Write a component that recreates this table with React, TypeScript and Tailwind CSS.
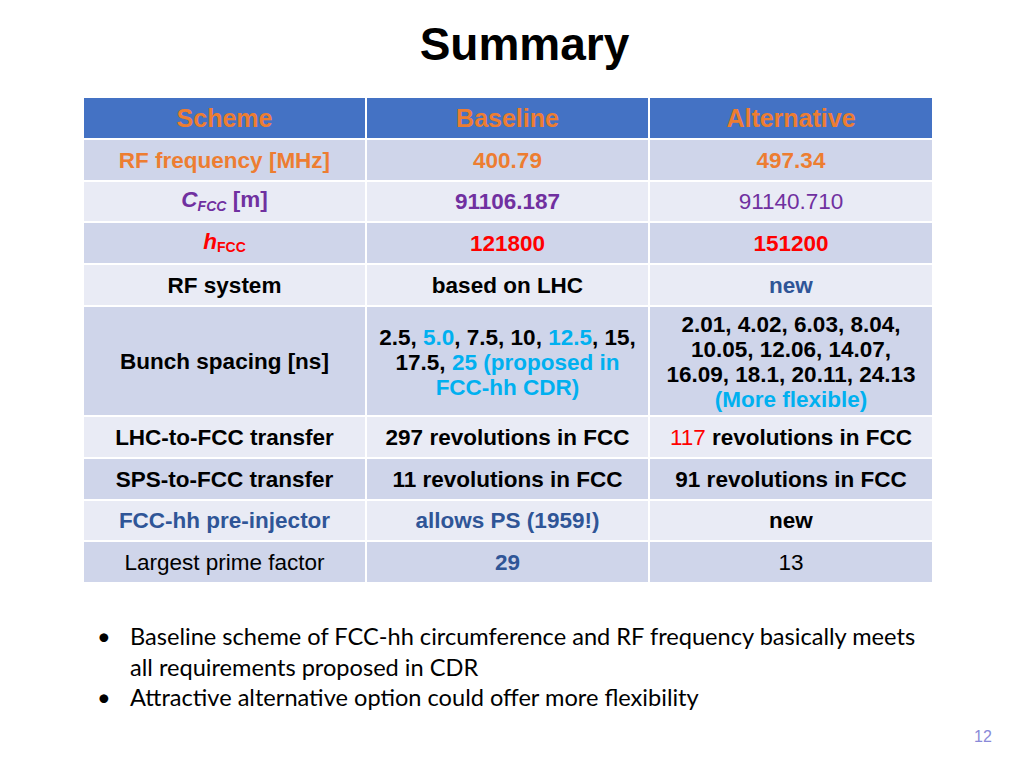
import React from "react";

const ORANGE = "text-[#ED7D31]";

function Cell({ children, bg, className = "" }: { children: React.ReactNode; bg: string; className?: string }) {
  return (
    <div className={`flex items-center justify-center text-center ${bg} ${className}`}>
      <div>{children}</div>
    </div>
  );
}

export default function App() {
  const dark = "bg-[#CFD5EA]";
  const light = "bg-[#E9EBF5]";
  const blue = "text-[#00B0F0]";
  const navy = "text-[#2F5597]";
  return (
    <div className="w-[1024px] h-[768px] bg-white relative overflow-hidden" style={{ fontFamily: '"Liberation Sans", Arial, sans-serif' }}>
      <h1 className="text-center font-bold text-[46px] leading-none text-black pt-[21px] pl-[25px]">Summary</h1>
      <div className="ml-[84px] mt-[31px] w-[848px] grid grid-cols-[281px_281px_282px] grid-rows-[40px_40px_39px_40px_40px_108px_40px_40px_39px_40px] gap-[2px] bg-white text-[22.5px] font-bold text-black leading-[25px]">
        <Cell bg="bg-[#4472C4]" className={`${ORANGE} text-[25px]`}>Scheme</Cell>
        <Cell bg="bg-[#4472C4]" className={`${ORANGE} text-[25px]`}>Baseline</Cell>
        <Cell bg="bg-[#4472C4]" className={`${ORANGE} text-[25px]`}>Alternative</Cell>

        <Cell bg={dark} className={ORANGE}>RF frequency [MHz]</Cell>
        <Cell bg={dark} className={ORANGE}>400.79</Cell>
        <Cell bg={dark} className={ORANGE}>497.34</Cell>

        <Cell bg={light} className="text-[#7030A0]">
          <span className="relative -top-[2px]">
            <i>C</i>
            <sub className="text-[14px] italic">FCC</sub> [m]
          </span>
        </Cell>
        <Cell bg={light} className="text-[#7030A0]">91106.187</Cell>
        <Cell bg={light} className="text-[#7030A0] font-normal">91140.710</Cell>

        <Cell bg={dark} className="text-[#FF0000]">
          <span className="relative -top-[2px]">
            <i>h</i>
            <sub className="text-[14px]">FCC</sub>
          </span>
        </Cell>
        <Cell bg={dark} className="text-[#FF0000]">121800</Cell>
        <Cell bg={dark} className="text-[#FF0000]">151200</Cell>

        <Cell bg={light}>RF system</Cell>
        <Cell bg={light}>based on LHC</Cell>
        <Cell bg={light} className={navy}>new</Cell>

        <Cell bg={dark}>Bunch spacing [ns]</Cell>
        <Cell bg={dark} className="px-[6px] pt-[2px]">
          2.5, <span className={blue}>5.0</span>, 7.5, 10, <span className={blue}>12.5</span>, 15,
          <br />
          17.5, <span className={blue}>25 (proposed in</span>
          <br />
          <span className={blue}>FCC-hh CDR)</span>
        </Cell>
        <Cell bg={dark} className="pt-[2px]">
          2.01, 4.02, 6.03, 8.04,
          <br />
          10.05, 12.06, 14.07,
          <br />
          16.09, 18.1, 20.11, 24.13
          <br />
          <span className={blue}>(More flexible)</span>
        </Cell>

        <Cell bg={light}>LHC-to-FCC transfer</Cell>
        <Cell bg={light}>297 revolutions in FCC</Cell>
        <Cell bg={light}>
          <span className="text-[#FF0000] font-normal">117</span> revolutions in FCC
        </Cell>

        <Cell bg={dark}>SPS-to-FCC transfer</Cell>
        <Cell bg={dark}>11 revolutions in FCC</Cell>
        <Cell bg={dark}>91 revolutions in FCC</Cell>

        <Cell bg={light} className={navy}>FCC-hh pre-injector</Cell>
        <Cell bg={light} className={navy}>allows PS (1959!)</Cell>
        <Cell bg={light}>new</Cell>

        <Cell bg={dark} className="font-normal">Largest prime factor</Cell>
        <Cell bg={dark} className={navy}>29</Cell>
        <Cell bg={dark} className="font-normal">13</Cell>
      </div>

      <ul className="mt-[39px] ml-[94px] text-[23.6px] leading-[30.5px] text-black" style={{ fontFamily: 'Lato, "Open Sans", sans-serif' }}>
        <li className="flex">
          <span className="w-[36px] shrink-0 pl-[3px]">•</span>
          <span className="w-[800px]">Baseline scheme of FCC-hh circumference and RF frequency basically meets all requirements proposed in CDR</span>
        </li>
        <li className="flex">
          <span className="w-[36px] shrink-0 pl-[3px]">•</span>
          <span>Attractive alternative option could offer more flexibility</span>
        </li>
      </ul>

      <div className="absolute left-[974px] top-[725px] text-[16px] text-[#8A8AD8]">12</div>
    </div>
  );
}
